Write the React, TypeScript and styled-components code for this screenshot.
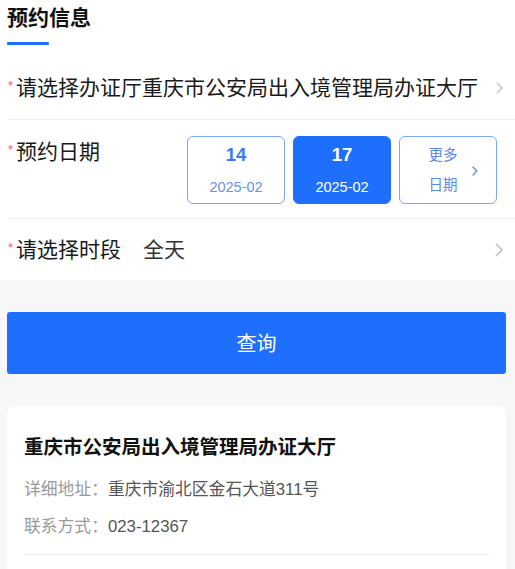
import styled, { createGlobalStyle } from "styled-components";

const GlobalStyle = createGlobalStyle`
  html, body {
    margin: 0;
    padding: 0;
    background: #f7f7f7;
    font-family: "Liberation Sans", "Noto Sans CJK SC", sans-serif;
    color: #1a1a1a;
  }
  * { box-sizing: border-box; }
`;

const blue = "#1f6fff";

/* ----------------------- FORM SECTION ----------------------- */

const FormSection = styled.section`
  background: #fff;
  padding-left: 8px;
`;

const Header = styled.header`
  padding-top: 4px;
  height: 56px;
`;

const Title = styled.h2`
  margin: 0;
  font-size: 21px;
  line-height: 28px;
  font-weight: 700;
  color: #111;
  margin-left: -1px;
`;

const Underline = styled.div`
  width: 42px;
  height: 2.5px;
  margin-top: 10px;
  margin-left: -1px;
  background: ${blue};
  border-radius: 1px;
`;

const Row = styled.div<{ $height?: number; $top?: boolean; $last?: boolean }>`
  display: flex;
  align-items: ${({ $top }) => ($top ? "flex-start" : "center")};
  min-height: ${({ $height }) => $height ?? 64}px;
  padding: ${({ $top }) => ($top ? "16px 18px 14px 0" : "0 12px 0 0")};
  border-bottom: ${({ $last }) => ($last ? "none" : "1px solid #f1f1f1")};
`;

const Label = styled.div`
  display: flex;
  align-items: flex-start;
  font-size: 21px;
  line-height: 32px;
  color: #1a1a1a;
  white-space: nowrap;
`;

const Required = styled.span`
  width: 11px;
  margin-left: -3px;
  padding-top: 7px;
  font-size: 13px;
  line-height: 14px;
  color: #f25a6a;
  text-align: center;
`;

const Value = styled.span`
  margin-left: 22px;
  color: #333;
`;

const Chevron = styled.svg<{ $size?: number }>`
  margin-left: auto;
  flex-shrink: 0;
  width: ${({ $size }) => ($size ?? 8) * 0.6}px;
  height: ${({ $size }) => $size ?? 8}px;
`;

const DateGroup = styled.div`
  display: flex;
  gap: 8px;
  margin-left: auto;
`;

const DateCard = styled.div<{ $active?: boolean }>`
  position: relative;
  width: 98px;
  height: 68px;
  border-radius: 6px;
  border: 1.5px solid ${({ $active }) => ($active ? blue : "#79a7ff")};
  background: ${({ $active }) => ($active ? blue : "#fff")};
  display: flex;
  flex-direction: column;
  align-items: center;
  justify-content: center;
  gap: 12px;
`;

const Day = styled.div<{ $active?: boolean }>`
  font-size: 18.5px;
  line-height: 22px;
  font-weight: 700;
  color: ${({ $active }) => ($active ? "#fff" : "#3e79f4")};
`;

const Month = styled.div<{ $active?: boolean }>`
  font-size: 14.5px;
  line-height: 18px;
  color: ${({ $active }) => ($active ? "#fff" : "#6690f2")};
`;

const MoreText = styled.div`
  font-size: 14.5px;
  line-height: 18px;
  color: #5d86ee;
  margin-left: -10px;
`;

const MoreArrow = styled.svg`
  position: absolute;
  right: 18px;
  top: 50%;
  width: 6px;
  height: 10px;
  margin-top: -4px;
`;

/* ----------------------- RESULTS AREA ----------------------- */

const Body = styled.div`
  padding: 32px 9px 40px 7px;
`;

const QueryButton = styled.button`
  display: block;
  width: 100%;
  height: 62px;
  border: none;
  border-radius: 3px;
  background: ${blue};
  color: #fff;
  font-family: inherit;
  font-size: 20px;
  padding-bottom: 2px;
  cursor: pointer;
`;

const Card = styled.div`
  margin-top: 32px;
  background: #fff;
  border-radius: 8px;
  padding: 27px 17px 40px;
`;

const CardTitle = styled.h3`
  margin: 0;
  font-size: 19.5px;
  line-height: 28px;
  font-weight: 700;
  color: #111;
`;

const InfoLine = styled.p<{ $gap: number }>`
  margin: ${({ $gap }) => $gap}px 0 0;
  font-size: 16.8px;
  line-height: 24px;
  color: #555;
`;

const InfoKey = styled.span`
  color: #999;
`;

const Divider = styled.div`
  margin-top: 15px;
  height: 1px;
  background: #efefef;
`;

const ArrowIcon = ({ color, size }: { color: string; size?: number }) => (
  <Chevron $size={size} viewBox="0 0 6 10" fill="none">
    <path d="M1 1l4 4-4 4" stroke={color} strokeWidth="1.3" strokeLinecap="round" strokeLinejoin="round" />
  </Chevron>
);

const dates = [
  { day: "14", month: "2025-02", active: false },
  { day: "17", month: "2025-02", active: true },
];

export default function App() {
  return (
    <>
      <GlobalStyle />
      <FormSection>
        <Header>
          <Title>预约信息</Title>
          <Underline />
        </Header>

        <Row $height={64}>
          <Label>
            <Required>*</Required>
            请选择办证厅重庆市公安局出入境管理局办证大厅
          </Label>
          <ArrowIcon color="#c9c9c9" size={12} />
        </Row>

        <Row $top>
          <Label>
            <Required>*</Required>
            预约日期
          </Label>
          <DateGroup>
            {dates.map((d) => (
              <DateCard key={d.day} $active={d.active}>
                <Day $active={d.active}>{d.day}</Day>
                <Month $active={d.active}>{d.month}</Month>
              </DateCard>
            ))}
            <DateCard>
              <MoreText>更多</MoreText>
              <MoreText>日期</MoreText>
              <MoreArrow viewBox="0 0 6 10" fill="none">
                <path d="M1 1l4 4-4 4" stroke="#5d86ee" strokeWidth="1.2" strokeLinecap="round" strokeLinejoin="round" />
              </MoreArrow>
            </DateCard>
          </DateGroup>
        </Row>

        <Row $height={61} $last>
          <Label>
            <Required>*</Required>
            请选择时段
            <Value>全天</Value>
          </Label>
          <ArrowIcon color="#c9c9c9" size={14} />
        </Row>
      </FormSection>

      <Body>
        <QueryButton>查询</QueryButton>
        <Card>
          <CardTitle>重庆市公安局出入境管理局办证大厅</CardTitle>
          <InfoLine $gap={17}>
            <InfoKey>详细地址：</InfoKey>重庆市渝北区金石大道311号
          </InfoLine>
          <InfoLine $gap={13}>
            <InfoKey>联系方式：</InfoKey>023-12367
          </InfoLine>
          <Divider />
        </Card>
      </Body>
    </>
  );
}
